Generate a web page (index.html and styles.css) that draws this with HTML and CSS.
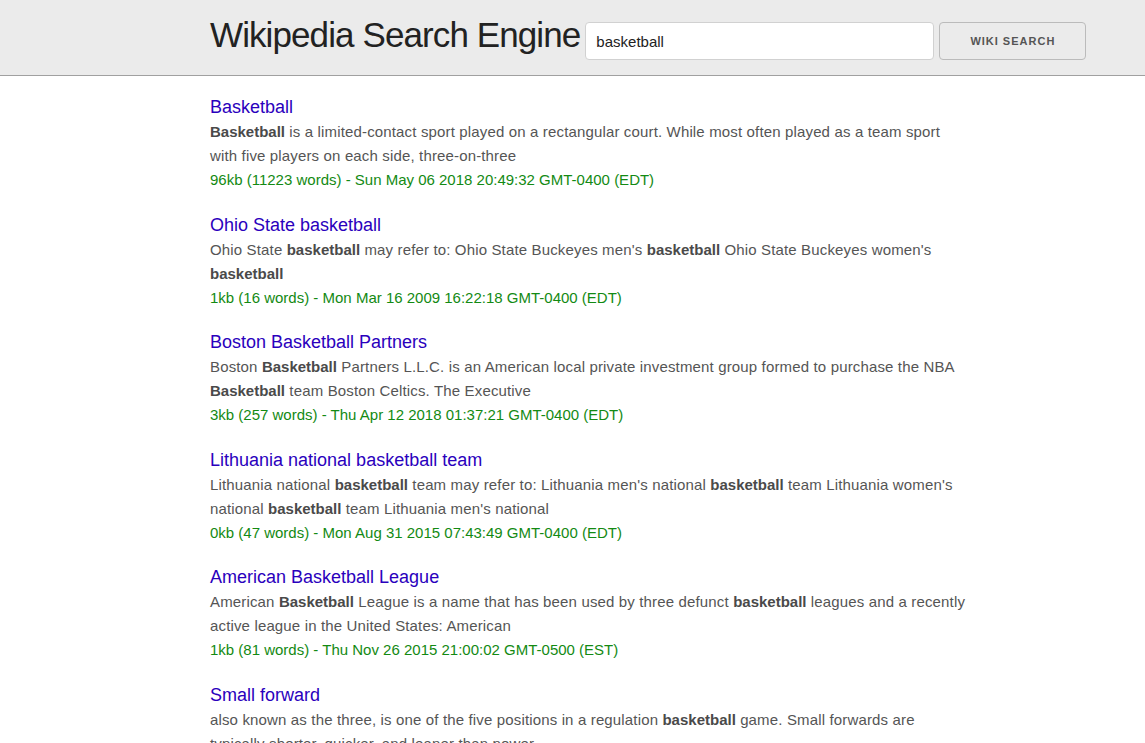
FILE: index.html
```html
<!DOCTYPE html>
<html lang="en">
<head>
<meta charset="utf-8">
<title>Wikipedia Search Engine</title>
<link rel="stylesheet" href="styles.css">
</head>
<body>
<header class="header">
  <h1 class="brand">Wikipedia Search Engine</h1>
  <form class="search" onsubmit="return false">
    <input class="search-input" type="text" value="basketball">
    <button class="search-button" type="submit">Wiki Search</button>
  </form>
</header>
<main class="results">
  <div class="result">
    <a class="result-title" href="#">Basketball</a>
    <p class="result-snippet"><b>Basketball</b> is a limited-contact sport played on a rectangular court. While most often played as a team sport with five players on each side, three-on-three</p>
    <p class="result-meta">96kb (11223 words) - Sun May 06 2018 20:49:32 GMT-0400 (EDT)</p>
  </div>
  <div class="result">
    <a class="result-title" href="#">Ohio State basketball</a>
    <p class="result-snippet">Ohio State <b>basketball</b> may refer to: Ohio State Buckeyes men's <b>basketball</b> Ohio State Buckeyes women's <b>basketball</b></p>
    <p class="result-meta">1kb (16 words) - Mon Mar 16 2009 16:22:18 GMT-0400 (EDT)</p>
  </div>
  <div class="result">
    <a class="result-title" href="#">Boston Basketball Partners</a>
    <p class="result-snippet">Boston <b>Basketball</b> Partners L.L.C. is an American local private investment group formed to purchase the NBA <b>Basketball</b> team Boston Celtics. The Executive</p>
    <p class="result-meta">3kb (257 words) - Thu Apr 12 2018 01:37:21 GMT-0400 (EDT)</p>
  </div>
  <div class="result">
    <a class="result-title" href="#">Lithuania national basketball team</a>
    <p class="result-snippet">Lithuania national <b>basketball</b> team may refer to: Lithuania men's national <b>basketball</b> team Lithuania women's national <b>basketball</b> team Lithuania men's national</p>
    <p class="result-meta">0kb (47 words) - Mon Aug 31 2015 07:43:49 GMT-0400 (EDT)</p>
  </div>
  <div class="result">
    <a class="result-title" href="#">American Basketball League</a>
    <p class="result-snippet">American <b>Basketball</b> League is a name that has been used by three defunct <b>basketball</b> leagues and a recently active league in the United States: American</p>
    <p class="result-meta">1kb (81 words) - Thu Nov 26 2015 21:00:02 GMT-0500 (EST)</p>
  </div>
  <div class="result">
    <a class="result-title" href="#">Small forward</a>
    <p class="result-snippet">also known as the three, is one of the five positions in a regulation <b>basketball</b> game. Small forwards are typically shorter, quicker, and leaner than power</p>
    <p class="result-meta">11kb (1457 words) - Fri Apr 27 2018 10:12:44 GMT-0400 (EDT)</p>
  </div>
</main>
</body>
</html>
```
FILE: styles.css
```css
* { box-sizing: border-box; }

html, body {
  margin: 0;
  padding: 0;
  background: #fff;
  font-family: "Liberation Sans", Arial, Helvetica, sans-serif;
  color: #555;
}

.header {
  display: flex;
  align-items: flex-start;
  height: 76px;
  padding: 22px 0 0 210px;
  background: #ebebeb;
  border-bottom: 1px solid #a0a0a0;
}

.brand {
  margin: -6px 0 0 0;
  font-size: 35px;
  line-height: 38px;
  font-weight: normal;
  color: #222;
  letter-spacing: -0.9px;
  white-space: nowrap;
}

.search {
  display: flex;
  gap: 5px;
  margin: 0 0 0 5px;
}

.search-input {
  width: 349px;
  height: 38px;
  padding: 6px 10px;
  border: 1px solid #d1d1d1;
  border-radius: 4px;
  background: #fff;
  font-family: inherit;
  font-size: 15px;
  color: #222;
  outline: none;
}

.search-button {
  width: 147px;
  height: 38px;
  padding: 0;
  border: 1px solid #bbb;
  border-radius: 4px;
  background: transparent;
  font-family: inherit;
  font-size: 11px;
  font-weight: bold;
  letter-spacing: 1px;
  text-transform: uppercase;
  color: #555;
}

.results {
  padding: 18px 0 0 210px;
  width: 969px;
}

.result {
  margin-bottom: 19.5px;
}

.result-title {
  display: block;
  font-size: 18px;
  line-height: 26px;
  color: #2a00bd;
  text-decoration: none;
}

.result-snippet,
.result-meta {
  margin: 0;
  font-size: 15px;
  line-height: 24px;
}

.result-snippet {
  letter-spacing: 0.15px;
}

.result-snippet b {
  color: #4a4a4a;
  letter-spacing: 0;
}

.result-meta {
  color: #138a13;
}
```
